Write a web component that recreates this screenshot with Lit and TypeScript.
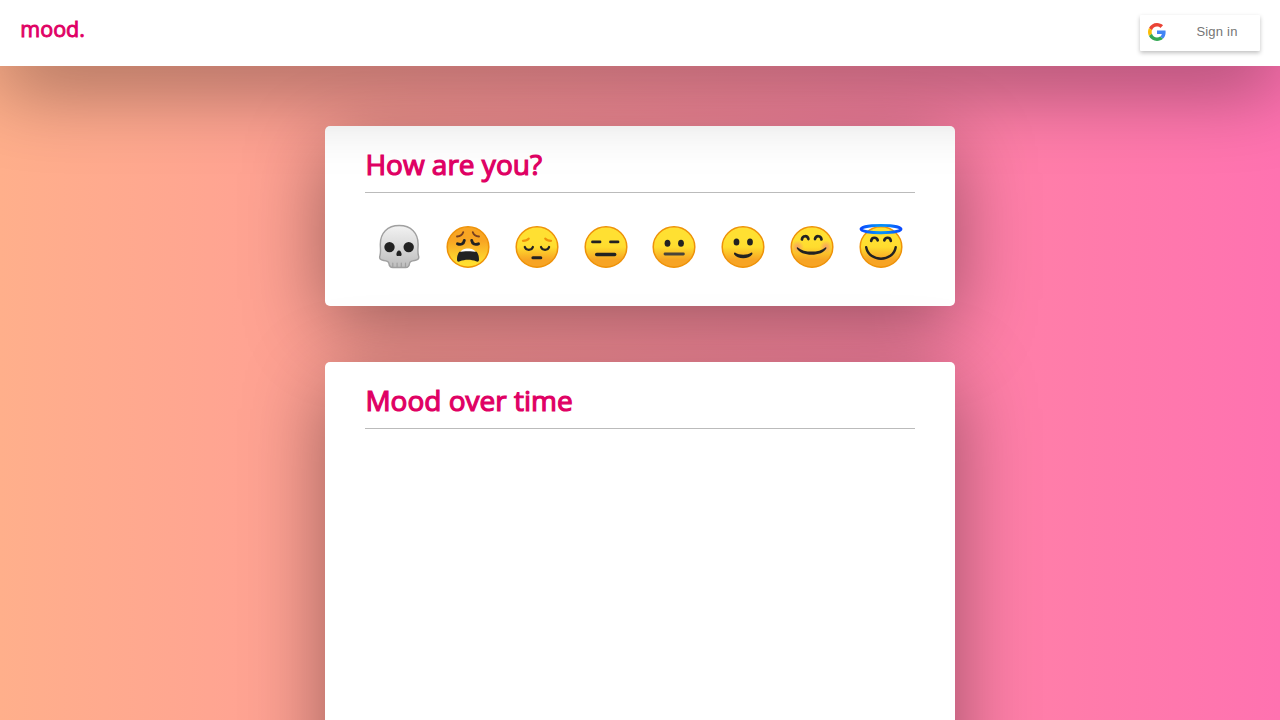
import { LitElement, html, css, svg } from "lit";
import { customElement } from "lit/decorators.js";

const stroke = (d: string, width: number, color = "#222") =>
  svg`<path d=${d} fill="none" stroke=${color} stroke-width=${width} stroke-linecap="round" stroke-linejoin="round"/>`;

const disc = (flip = false) => svg`<ellipse cx="22" cy="24" rx="20.8" ry="20.2" fill=${flip ? "url(#warm)" : "url(#face)"} stroke="#ee9209" stroke-width="1.5"/>`;

const skull = svg`<g transform="translate(1.2 -.3) scale(.955 1)"><path d="M22 2.8C9.5 2.8 2.2 10.5 2.2 21.5c0 4 .8 8-.4 11.5-1 3 .5 4.500 4 4.800 3.500.3 5.200.7 5.500 3.200.3 3 1.500 3.800 4 3.800h13.400c2.500 0 3.700-.8 4-3.800.3-2.500 2-2.900 5.500-3.200 3.500-.3 5-1.800 4-4.800-1.200-3.500-.4-7.500-.4-11.500C41.800 10.500 34.500 2.800 22 2.800z" fill="url(#bone)" stroke="#a0a0a0" stroke-width="1.500"/></g>
<circle cx="12.500" cy="24.100" r="5.200" fill="#222"/><circle cx="31.700" cy="24.100" r="5.200" fill="#222"/>
<path d="M22 27.500c-1.500 0-2.700 2.200-2.600 4 .1 1.600 1.400 1.800 2.600 1.300 1.200.5 2.500.3 2.600-1.300.1-1.800-1.100-4-2.600-4z" fill="#222"/>
${stroke("M15.800 40v4M20.100 40v4M24.300 40v4M28.500 40v4", 1.2, "#a0a0a0")}`;

const weary = svg`${disc(true)}
${stroke("M11 13.500c3-.3 5.300-1.600 6.200-4.300M26.800 9.200c.9 2.700 3.200 4 6.200 4.300", 1.9, "#79401f")}
${stroke("M11.500 20.800c3.500 1.300 6.100.3 6.800-3.300M25.700 17.500c.7 3.600 3.300 4.600 6.800 3.300", 2.9)}
<path d="M14.300 29.500c1.500-5.200 13.900-5.200 15.400 0z" fill="#fff"/>
<path d="M11 36.800c0-3.800.8-6.100 2.300-8 5-.9 12.400-.9 17.400 0 1.500 1.900 2.300 4.200 2.300 8 0 2-1.500 2.200-3 1.500-5-2-11-2-16 0-1.500.7-3 .5-3-1.500z" fill="#222"/>`;

const pensive = svg`${disc()}
${stroke("M8 17.800c2.500 0 4.500-.7 5.700-2.200M30.300 15.600c1.200 1.500 3.200 2.200 5.700 2.200", 2.300, "#ee9209")}
${stroke("M9.800 24c1.200 3.700 6.900 3.700 8.100 0M26 24c1.200 3.700 6.900 3.700 8.100 0", 2.300)}
${stroke("M17.900 34.700h7.900", 3)}`;

const expressionless = svg`${disc()}${stroke("M8.500 18.900h7.500M26.500 18.900h7.500", 2.800)}${stroke("M12.700 31.600h18", 3.500)}`;
const eyes = svg`<ellipse cx="15.500" cy="20.300" rx="2.900" ry="3.500" fill="#222"/><ellipse cx="29" cy="20.300" rx="2.900" ry="3.500" fill="#222"/>`;
const neutral = svg`${disc()}${eyes}${stroke("M13 31h18.400", 2.800, "#49443a")}`;
const slight = svg`${disc()}<g transform="translate(0 -1.400)">${eyes}</g><path d="M14 29.600c4.500 3 12 3 16.500 0 .8-.2 1.200.7.8 1.600-3.200 5.300-15 5.300-18.200 0-.4-.9.100-1.800.9-1.600z" fill="#222"/>`;
const smiling = svg`${disc()}
<circle cx="7.500" cy="24" r="6.500" fill="url(#blush)"/><circle cx="36" cy="24" r="6.500" fill="url(#blush)"/>
${stroke("M11.900 16.500c.5-4.300 5.700-4.300 6.500-.4M25 16.100c.8-3.900 6-3.900 6.500.4", 2.700)}
<path d="M7.800 24.400c6.200 5.600 21.400 5.600 27.600 0 .7-.4 1.300.1 1 .9-4 8.700-25.600 8.700-29.600 0-.3-.8.3-1.300 1-.9z" fill="#222"/>`;
const halo = svg`${disc()}
<ellipse cx="22" cy="6.100" rx="20" ry="3.700" fill="none" stroke="url(#ring)" stroke-width="2.900"/>
${stroke("M12.200 17.800c.5-4 5.700-4 6.500-.4M25.300 17.400c.8-3.600 6-3.600 6.500.4", 2.700)}
${stroke("M7.200 24.200c2.500 15.300 27 15.300 29.500 0", 2.400)}`;

const moods = [skull, weary, pensive, expressionless, neutral, slight, smiling, halo];

@customElement("app-root")
class AppRoot extends LitElement {
  static styles = css`
    :host { display: block; height: 720px; overflow: hidden; font-family: "Open Sans", sans-serif; background: linear-gradient(to right, #ffaf8b, #ff72b0); }
    * { box-sizing: border-box; }
    header { position: relative; z-index: 0; height: 66px; background: #fff; padding: 15px 20px; display: flex; justify-content: space-between; box-shadow: 0 20px 80px rgba(0,0,0,.4); }
    .logo { color: #e00064; font-size: 21.5px; line-height: 28px; padding-left: .3px; -webkit-text-stroke: .9px; }
    .signin { height: 36px; width: 120px; background: #fff; border-radius: 1px; box-shadow: 0 2px 4px 0 rgba(0,0,0,.25); display: flex; align-items: center; padding: 0 8px 2px; font: 13px "Liberation Sans", Arial, sans-serif; color: #757575; letter-spacing: .21px; }
    .signin svg { width: 18px; height: 18px; }
    .signin span { flex: 1; text-align: center; padding-left: 16px; line-height: 34px; }
    main { display: flex; flex-direction: column; align-items: center; gap: 56px; padding-top: 60px; }
    section { width: 630px; height: 180px; background: #fff; border-radius: 5px; padding: 20px 40px; box-shadow: 0 20px 80px rgba(0,0,0,.4); }
    .tall { height: 480px; }
    h1 { margin: 0; height: 47px; border-bottom: 1px solid #bbb; color: #e00064; font-size: 28px; line-height: 36px; font-weight: 400; padding-left: .4px; -webkit-text-stroke: 1.2px; }
    .moods { display: flex; justify-content: space-around; padding-top: 30px; }
    .moods svg { width: 44px; height: 48px; }
    .defs { width: 0; height: 0; display: block; }
  `;
  render() {
    return html`<header><div class="logo">mood.</div><div class="signin">
<svg viewBox="0 0 48 48"><path fill="#EA4335" d="M24 9.5c3.54 0 6.71 1.22 9.21 3.6l6.85-6.85C35.9 2.38 30.47 0 24 0 14.62 0 6.51 5.38 2.56 13.22l7.98 6.19C12.43 13.72 17.74 9.5 24 9.5z"/><path fill="#4285F4" d="M46.98 24.55c0-1.57-.15-3.09-.38-4.55H24v9.02h12.94c-.58 2.96-2.26 5.48-4.78 7.18l7.73 6c4.51-4.18 7.09-10.36 7.09-17.65z"/><path fill="#FBBC05" d="M10.53 28.59c-.48-1.45-.76-2.99-.76-4.59s.27-3.14.76-4.59l-7.98-6.19C.92 16.46 0 20.12 0 24c0 3.88.92 7.54 2.56 10.78l7.97-6.19z"/><path fill="#34A853" d="M24 48c6.48 0 11.93-2.13 15.89-5.81l-7.73-6c-2.15 1.45-4.92 2.3-8.16 2.3-6.26 0-11.57-4.22-13.47-9.91l-7.98 6.19C6.51 42.62 14.62 48 24 48z"/></svg><span>Sign in</span></div></header>
<svg class="defs"><defs>
<linearGradient id="face" x2="0" y2="1"><stop offset=".3" stop-color="#ffe032"/><stop offset=".5" stop-color="#ffdc2e"/><stop offset=".82" stop-color="#f7a424"/></linearGradient>
<linearGradient id="warm" x2="0" y2="1"><stop offset=".35" stop-color="#f8a523"/><stop offset=".9" stop-color="#ffdf30"/></linearGradient>
<linearGradient id="bone" x2="0" y2="1"><stop offset="0" stop-color="#f2f2f2"/><stop offset=".45" stop-color="#dcdcdc"/><stop offset="1" stop-color="#bcbcbc"/></linearGradient>
<radialGradient id="blush"><stop offset=".2" stop-color="#f59a66" stop-opacity=".75"/><stop offset="1" stop-color="#f59a66" stop-opacity="0"/></radialGradient>
<linearGradient id="ring"><stop offset="0" stop-color="#0a48ff"/><stop offset=".4" stop-color="#058ef8"/><stop offset=".6" stop-color="#058ef8"/><stop offset="1" stop-color="#0a48ff"/></linearGradient>
</defs></svg>
<main><section><h1>How are you?</h1><div class="moods">${moods.map(m => html`<svg viewBox="0 0 44 48">${m}</svg>`)}</div></section><section class="tall"><h1>Mood over time</h1></section></main>`;
  }
}
